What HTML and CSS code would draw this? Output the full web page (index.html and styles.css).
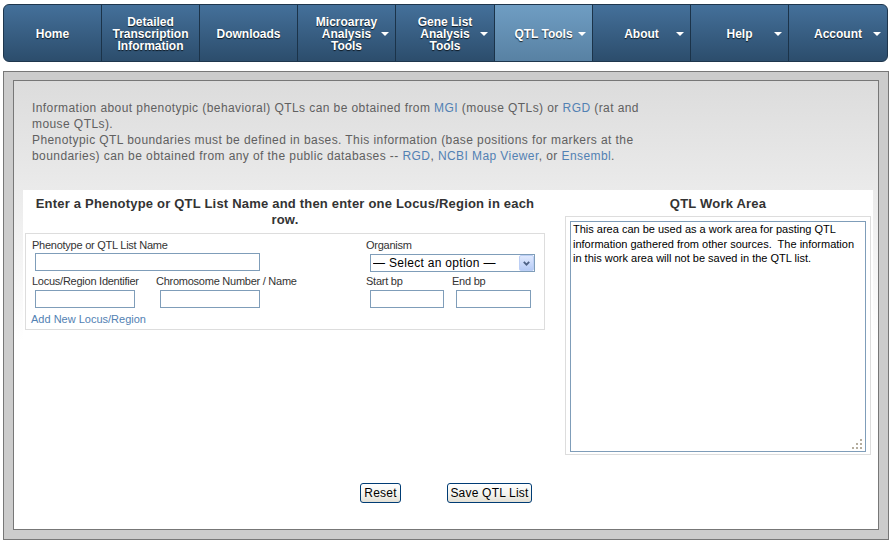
FILE: index.html
```html
<!DOCTYPE html>
<html lang="en">
<head>
<meta charset="utf-8">
<title>QTL Tools</title>
<link rel="stylesheet" href="styles.css">
</head>
<body>
<nav class="nav">
  <a class="nav-item w98">Home</a>
  <a class="nav-item w98">Detailed<br>Transcription<br>Information</a>
  <a class="nav-item w98">Downloads</a>
  <a class="nav-item w98">Microarray<br>Analysis<br>Tools<span class="caret"></span></a>
  <a class="nav-item w99">Gene List<br>Analysis<br>Tools<span class="caret"></span></a>
  <a class="nav-item w98 active">QTL Tools<span class="caret"></span></a>
  <a class="nav-item w98">About<span class="caret"></span></a>
  <a class="nav-item w98">Help<span class="caret"></span></a>
  <a class="nav-item last">Account<span class="caret"></span></a>
</nav>

<div class="frame">
  <div class="panel">
    <p class="intro">Information about phenotypic (behavioral) QTLs can be obtained from <a>MGI</a> (mouse QTLs) or <a>RGD</a> (rat and mouse QTLs).<br>Phenotypic QTL boundaries must be defined in bases. This information (base positions for markers at the boundaries) can be obtained from any of the public databases -- <a>RGD</a>, <a>NCBI Map Viewer</a>, or <a>Ensembl</a>.</p>

    <div class="work">
      <section class="form-col">
        <h2 class="heading">Enter a Phenotype or QTL List Name and then enter one Locus/Region in each row.</h2>
        <div class="form-box">
          <label class="lbl span2">Phenotype or QTL List Name</label>
          <label class="lbl span2">Organism</label>
          <input class="field f-name span2" type="text">
          <div class="combo span2">
            <select class="combo-select"><option>&mdash; Select an option &mdash;</option></select>
            <span class="combo-btn"><svg width="7" height="5" viewBox="0 0 7 5"><path d="M0.8 0.8 L3.5 3.6 L6.2 0.8" stroke="#4d6185" stroke-width="1.8" fill="none"/></svg></span>
          </div>
          <label class="lbl row2">Locus/Region Identifier</label>
          <label class="lbl row2">Chromosome Number / Name</label>
          <label class="lbl row2">Start bp</label>
          <label class="lbl row2">End bp</label>
          <input class="field f-locus" type="text">
          <input class="field f-chrom" type="text">
          <input class="field f-start" type="text">
          <input class="field f-end" type="text">
          <a class="add-link span4">Add New Locus/Region</a>
        </div>
      </section>
      <section class="area-col">
        <h2 class="heading">QTL Work Area</h2>
        <div class="area-box">
          <div class="area-wrap">
            <textarea class="area">This area can be used as a work area for pasting QTL information gathered from other sources.  The information in this work area will not be saved in the QTL list.</textarea>
            <svg class="grip" width="10" height="10" viewBox="0 0 10 10"><rect x="8" y="0" width="2" height="2"/><rect x="4" y="4" width="2" height="2"/><rect x="8" y="4" width="2" height="2"/><rect x="0" y="8" width="2" height="2"/><rect x="4" y="8" width="2" height="2"/><rect x="8" y="8" width="2" height="2"/></svg>
          </div>
        </div>
      </section>
    </div>

    <div class="buttons">
      <button class="btn btn-reset" type="button">Reset</button>
      <button class="btn btn-save" type="button">Save QTL List</button>
    </div>
  </div>
</div>
</body>
</html>
```

FILE: styles.css
```css
* { box-sizing: border-box; }

body {
  margin: 0;
  background: #fff;
  font-family: "Liberation Sans", Arial, sans-serif;
}

/* ---------- navigation ---------- */
.nav {
  display: flex;
  margin: 4px 0 0 3px;
  width: 885px;
  height: 58px;
  border: 1px solid #1e364d;
  border-radius: 6px;
  overflow: hidden;
  background: linear-gradient(#44709a, #2c4d6c);
}

.nav-item {
  position: relative;
  display: flex;
  align-items: center;
  justify-content: center;
  padding-top: 2px;
  text-align: center;
  color: #fff;
  font-weight: bold;
  font-size: 12px;
  line-height: 12px;
  text-shadow: 0 1px 1px rgba(0, 0, 0, 0.75);
  border-right: 1px solid #1b3349;
  text-decoration: none;
}

.w98 { width: 98px; }
.w99 { width: 99px; }
.nav-item.last { flex: 1; border-right: 0; }

.nav-item.active {
  background: linear-gradient(#6f9dc3, #5881a3);
}

.caret {
  position: absolute;
  right: 6px;
  top: 50%;
  margin-top: -1px;
  width: 0;
  height: 0;
  border-left: 4px solid transparent;
  border-right: 4px solid transparent;
  border-top: 4px solid #fff;
}

/* ---------- frame ---------- */
.frame {
  margin: 9px 0 0 3px;
  width: 886px;
  height: 469px;
  border: 1px solid #777;
  background: #ccc;
  padding: 8px 9px 9px 9px;
}

.panel {
  height: 100%;
  border: 1px solid #777;
  background: linear-gradient(to bottom, #dcdcdc 0, #ffffff 260px) #fff;
  padding-top: 19px;
}

.intro {
  margin: 0 0 0 18px;
  width: 620px;
  font-size: 12px;
  line-height: 16px;
  letter-spacing: 0.42px;
  color: #606060;
}

.intro a, .add-link {
  color: #5281b3;
  text-decoration: none;
}

/* ---------- work area ---------- */
.work {
  display: flex;
  margin: 26px 5px 0 9px;
  padding: 6px 2px 0 2px;
  background: #fff;
}

.form-col { width: 520px; }

.area-col {
  width: 306px;
  margin-left: 20px;
}

.heading {
  margin: 0;
  font-size: 13px;
  line-height: 16px;
  font-weight: bold;
  letter-spacing: 0.2px;
  color: #333;
  text-align: center;
}

.form-box {
  margin-top: 5px;
  border: 1px solid #ddd;
  padding: 4px 0 2px 6px;
  display: grid;
  grid-template-columns: 124px 210px 86px 1fr;
  align-items: start;
}

.span2 { grid-column: span 2; }
.span4 { grid-column: span 4; }

.lbl {
  font-size: 11px;
  line-height: 15px;
  letter-spacing: -0.25px;
  color: #333;
}

.lbl.row2 { margin-top: 2px; }

.field {
  display: block;
  height: 18px;
  border: 1px solid #7f9db9;
  background: #fff;
  margin: 0 0 0 4px;
  padding: 0 2px;
  font: 12px "Liberation Sans", Arial, sans-serif;
}

.f-name { width: 225px; margin-left: 3px; }
.f-locus { width: 100px; margin-left: 3px; margin-top: 1px; }
.f-chrom { width: 100px; margin-top: 1px; }
.f-start { width: 74px; margin-top: 1px; }
.f-end { width: 75px; margin-top: 1px; }

.combo {
  display: flex;
  align-items: center;
  width: 165px;
  height: 18px;
  margin: 1px 0 0 4px;
  border: 1px solid #7f9db9;
  background: #fff;
}

.combo-select {
  flex: 1;
  min-width: 0;
  height: 16px;
  border: 0;
  padding: 0 0 0 2px;
  background: transparent;
  -webkit-appearance: none;
  appearance: none;
  font: 12px/16px "Liberation Sans", Arial, sans-serif;
  letter-spacing: 0.3px;
  color: #000;
  outline: none;
}

.combo-btn {
  display: flex;
  align-items: center;
  justify-content: center;
  width: 15px;
  height: 16px;
  border: 1px solid #bccff5;
  border-radius: 2px;
  background: linear-gradient(#e0e9fe, #b6cbf6);
}

.add-link {
  margin-top: 4px;
  margin-left: -1px;
  font-size: 11px;
  line-height: 15px;
}

/* ---------- QTL work area ---------- */
.area-box {
  margin-top: 4px;
  border: 1px solid #ddd;
  padding: 4px 0 2px 4px;
}

.area-wrap {
  position: relative;
  width: 296px;
  height: 231px;
}

.area {
  display: block;
  width: 100%;
  height: 100%;
  margin: 0;
  border: 1px solid #7f9db9;
  padding: 0 6px 0 2px;
  font: 11px/14.5px "Liberation Sans", Arial, sans-serif;
  color: #000;
  resize: none;
  outline: none;
  overflow: hidden;
  background: #fff;
}

.grip {
  position: absolute;
  right: 4px;
  bottom: 3px;
  fill: #b5ae9f;
}

/* ---------- buttons ---------- */
.buttons {
  display: flex;
  justify-content: center;
  gap: 46px;
  margin-top: 28px;
}

.btn {
  height: 20px;
  padding: 0;
  border: 1px solid #003c74;
  border-radius: 3px;
  background: linear-gradient(#ffffff 0, #f4f4ef 55%, #e3e0d5 100%);
  font: 12px "Liberation Sans", Arial, sans-serif;
  letter-spacing: 0.2px;
  color: #000;
}

.btn-reset { width: 41px; }
.btn-save { width: 85px; }
```
